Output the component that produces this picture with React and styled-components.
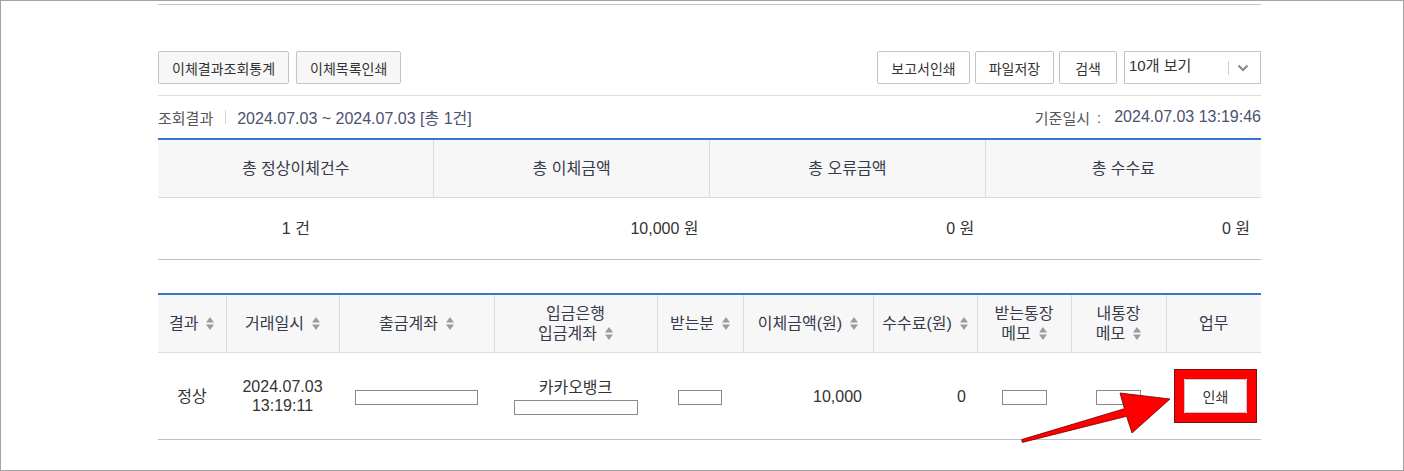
import React from 'react';
import styled, { createGlobalStyle } from 'styled-components';

const GlobalStyle = createGlobalStyle`
  html, body {
    margin: 0;
    padding: 0;
    background: #fff;
  }
  body {
    font-family: "Liberation Sans", "Noto Sans CJK KR", sans-serif;
    color: #333;
  }
`;

const Frame = styled.div`
  position: relative;
  width: 1404px;
  height: 471px;
  box-sizing: border-box;
  border: 1px solid #a4a4a4;
  padding-top: 3px;
  overflow: hidden;
`;

const Content = styled.div`
  width: 1103px;
  margin-left: 157px;
  border-top: 1px solid #c3c7d8;
`;

const Toolbar = styled.div`
  display: flex;
  justify-content: space-between;
  align-items: center;
  margin-top: 46px;
  padding-bottom: 11px;
  border-bottom: 1px solid #dedede;
`;

const Group = styled.div`
  display: flex;
  gap: ${(p) => p.gap || 5}px;
`;

const Button = styled.button`
  height: 33px;
  padding: 0 ${(p) => p.pad || 13}px;
  border: 1px solid #c4c4c4;
  border-radius: 2px;
  background: ${(p) => (p.gray ? '#f7f7f7' : '#fff')};
  font-family: inherit;
  font-size: 14px;
  color: #333;
  cursor: pointer;
`;

const Select = styled.div`
  width: 137px;
  height: 33px;
  box-sizing: border-box;
  border: 1px solid #c4c4c4;
  display: flex;
  align-items: center;
  padding-left: 4px;
  font-size: 15px;
  color: #333;
  margin-left: 2px;
`;

const SelectText = styled.span`
  flex: 1;
  margin-top: -6px;
`;

const SelectDivider = styled.span`
  width: 1px;
  height: 14px;
  background: #cfcfcf;
  margin-right: 8px;
`;

const Chevron = styled.svg`
  width: 12px;
  height: 8px;
  margin-right: 11px;
`;

const InfoRow = styled.div`
  display: flex;
  justify-content: space-between;
  align-items: center;
  height: 42px;
  font-size: 15px;
  color: #555;
`;

const InfoLeft = styled.div`
  display: flex;
  align-items: center;
`;

const InfoRight = styled.div`
  display: flex;
  align-items: center;
`;

const Colon = styled.span`
  margin: 0 13px 0 7px;
`;

const Bar = styled.span`
  width: 1px;
  height: 14px;
  background: #d6d6d6;
  margin: 0 11px 0 12px;
`;

const DateText = styled.span`
  color: #4a5270;
  font-size: 16px;
`;

const Table = styled.table`
  width: 1103px;
  border-collapse: collapse;
  table-layout: fixed;
  border-top: 2px solid #3576cf;
  border-bottom: 1px solid #b9bed2;
  margin-bottom: ${(p) => p.mb || 0}px;
  font-size: 16px;
`;

const Th = styled.th`
  height: ${(p) => p.h || 57}px;
  padding: 0;
  background: #f7f7f7;
  font-weight: normal;
  color: #363a4c;
  border-bottom: 1px solid #dcdcdc;
  border-left: 1px solid #dcdcdc;
  line-height: 20px;
  &:first-child {
    border-left: none;
  }
`;

const Td = styled.td`
  height: ${(p) => p.h || 61}px;
  padding: 0 ${(p) => (p.align === 'right' ? 11 : 0)}px 0 0;
  text-align: ${(p) => p.align || 'center'};
  color: #333;
  line-height: 19px;
`;

const Box = styled.span`
  display: inline-block;
  width: ${(p) => p.w}px;
  height: 15px;
  box-sizing: border-box;
  border: 1px solid #8a8a8a;
  background: #fff;
  vertical-align: middle;
`;

const Stack = styled.div`
  display: flex;
  flex-direction: column;
  align-items: center;
  gap: 3px;
`;

const Highlight = styled.span`
  display: inline-block;
  border: 9px solid #f00;
  outline: 1px solid #7a1010;
  margin-left: 4px;
  line-height: 0;
`;

const PrintButton = styled.button`
  width: 63px;
  height: 34px;
  border: 1px solid #c8c8c8;
  border-radius: 2px;
  background: #fff;
  font-family: inherit;
  font-size: 14px;
  color: #333;
`;

const SortIcon = styled.svg`
  width: 8px;
  height: 13px;
  margin-left: 8px;
  vertical-align: -1px;
`;

const Overlay = styled.svg`
  position: absolute;
  left: -1px;
  top: -1px;
  width: 1404px;
  height: 471px;
  pointer-events: none;
`;

const Sort = () => (
  <SortIcon viewBox="0 0 8 13">
    <path d="M4 0 L8 5.5 H0 Z M4 13 L0 7.5 H8 Z" fill="#9c9c9c" />
  </SortIcon>
);

const summaryHeads = ['총 정상이체건수', '총 이체금액', '총 오류금액', '총 수수료'];
const listCols = [68, 113, 155, 163, 86, 130, 104, 94, 95, 95];

const App = () => {
  return (
    <>
      <GlobalStyle />
      <Frame>
        <Content>
          <Toolbar>
            <Group gap={7}>
              <Button gray>이체결과조회통계</Button>
              <Button gray>이체목록인쇄</Button>
            </Group>
            <Group>
              <Button>보고서인쇄</Button>
              <Button>파일저장</Button>
              <Button pad={15}>검색</Button>
              <Select>
                <SelectText>10개 보기</SelectText>
                <SelectDivider />
                <Chevron viewBox="0 0 12 8">
                  <path d="M1.5 1.5 L6 6 L10.5 1.5" fill="none" stroke="#888" strokeWidth="2" />
                </Chevron>
              </Select>
            </Group>
          </Toolbar>

          <InfoRow>
            <InfoLeft>
              조회결과
              <Bar />
              <DateText>2024.07.03 ~ 2024.07.03 [총 1건]</DateText>
            </InfoLeft>
            <InfoRight>
              기준일시<Colon>:</Colon>
              <DateText>2024.07.03 13:19:46</DateText>
            </InfoRight>
          </InfoRow>

          <Table mb={33}>
            <thead>
              <tr>
                {summaryHeads.map((h) => (
                  <Th key={h}>{h}</Th>
                ))}
              </tr>
            </thead>
            <tbody>
              <tr>
                <Td>1 건</Td>
                <Td align="right">10,000 원</Td>
                <Td align="right">0 원</Td>
                <Td align="right">0 원</Td>
              </tr>
            </tbody>
          </Table>

          <Table>
            <colgroup>
              {listCols.map((w, i) => (
                <col key={i} style={{ width: w }} />
              ))}
            </colgroup>
            <thead>
              <tr>
                <Th>결과<Sort /></Th>
                <Th>거래일시<Sort /></Th>
                <Th>출금계좌<Sort /></Th>
                <Th>입금은행<br />입금계좌<Sort /></Th>
                <Th>받는분<Sort /></Th>
                <Th>이체금액(원)<Sort /></Th>
                <Th>수수료(원)<Sort /></Th>
                <Th>받는통장<br />메모<Sort /></Th>
                <Th>내통장<br />메모<Sort /></Th>
                <Th>업무</Th>
              </tr>
            </thead>
            <tbody>
              <tr>
                <Td h={86}>정상</Td>
                <Td h={86}>2024.07.03<br />13:19:11</Td>
                <Td h={86}><Box w={123} /></Td>
                <Td h={86}>
                  <Stack>
                    카카오뱅크
                    <Box w={124} />
                  </Stack>
                </Td>
                <Td h={86}><Box w={44} /></Td>
                <Td h={86} align="right">10,000</Td>
                <Td h={86} align="right">0</Td>
                <Td h={86}><Box w={45} /></Td>
                <Td h={86}><Box w={45} /></Td>
                <Td h={86}>
                  <Highlight>
                    <PrintButton>인쇄</PrintButton>
                  </Highlight>
                </Td>
              </tr>
            </tbody>
          </Table>
        </Content>

        <Overlay viewBox="0 0 1404 471">
          <polygon
            points="1021.6,439.6 1124.4,408.7 1120,393 1170,399 1132,433 1126.6,416.3 1022.4,442.4"
            fill="#f00"
            stroke="#6a0000"
            strokeWidth="0.8"
            strokeLinejoin="round"
          />
        </Overlay>
      </Frame>
    </>
  );
};

export default App;
